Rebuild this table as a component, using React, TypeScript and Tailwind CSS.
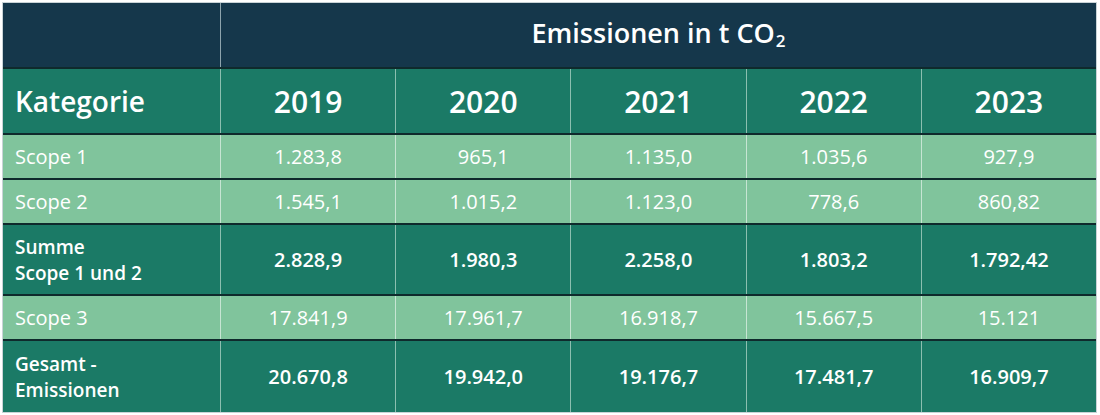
const years = ["2019", "2020", "2021", "2022", "2023"];

type Row = {
  label: string[];
  values: string[];
  strong?: boolean;
};

const rows: Row[] = [
  { label: ["Scope 1"], values: ["1.283,8", "965,1", "1.135,0", "1.035,6", "927,9"] },
  { label: ["Scope 2"], values: ["1.545,1", "1.015,2", "1.123,0", "778,6", "860,82"] },
  {
    label: ["Summe", "Scope 1 und 2"],
    values: ["2.828,9", "1.980,3", "2.258,0", "1.803,2", "1.792,42"],
    strong: true,
  },
  { label: ["Scope 3"], values: ["17.841,9", "17.961,7", "16.918,7", "15.667,5", "15.121"] },
  {
    label: ["Gesamt -", "Emissionen"],
    values: ["20.670,8", "19.942,0", "19.176,7", "17.481,7", "16.909,7"],
    strong: true,
  },
];

export default function App() {
  return (
    <div className="h-[415px] w-[1100px] bg-white pl-[2px] pt-[2px] font-['Open_Sans',sans-serif] text-white">
      <div className="w-[1095px] border border-[#c9d3d7]">
        {/* header */}
        <div className="grid h-[66px] grid-cols-[217px_1fr] border-b-2 border-[#0f2a2c] bg-[#15374b]">
          <div />
          <div className="flex items-center justify-center border-l border-[#8ea4ad] pb-1 text-[27px] font-semibold">
            <span>Emissionen in t CO</span>
            <span className="relative top-[8px] ml-[1px] text-[17px]">2</span>
          </div>
        </div>
        <div className="grid h-[66px] grid-cols-[217px_repeat(5,1fr)] border-b-2 border-[#0f2a2c] bg-[#1b7a66]">
          <div className="flex items-center px-3 text-[28px] font-semibold">Kategorie</div>
          {years.map((y) => (
            <div
              key={y}
              className="flex items-center justify-center border-l border-[#8cbfb0] text-[30px] font-semibold"
            >
              {y}
            </div>
          ))}
        </div>

        {rows.map((row, i) => (
          <div
            key={row.label.join(" ")}
            className={
              "grid grid-cols-[217px_repeat(5,1fr)] " +
              (i < rows.length - 1 ? "border-b-2 border-[#0f2a2c] " : "") +
              (row.strong
                ? "h-[71px] bg-[#1b7a66] text-[19px] font-semibold"
                : "h-[45px] bg-[#80c49c] text-[20px] font-normal")
            }
          >
            <div className="flex flex-col justify-center px-3 leading-[26px]">
              {row.label.map((l) => (
                <span key={l}>{l}</span>
              ))}
            </div>
            {row.values.map((v, j) => (
              <div
                key={j}
                className={
                  "flex items-center justify-center border-l text-[20px] " +
                  (row.strong ? "border-[#8cbfb0]" : "border-[#c7e5d3]")
                }
              >
                {v}
              </div>
            ))}
          </div>
        ))}
      </div>
    </div>
  );
}
